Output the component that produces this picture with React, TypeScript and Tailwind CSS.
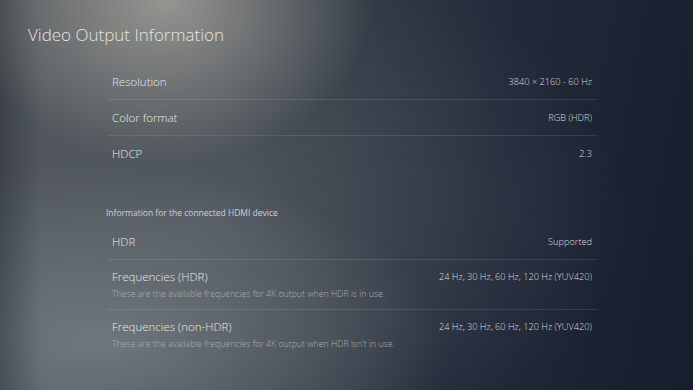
import React from "react";

const font = { fontFamily: '"Open Sans", "Noto Sans", sans-serif' };

function Row({ label, value, sub, border = true }: { label: string; value: string; sub?: string; border?: boolean }) {
  return (
    <div className={`flex flex-col ${border ? "border-b border-[rgba(255,255,255,0.1)]" : ""} ${sub ? "h-[50px] pt-[9px]" : "h-[36px] justify-center"} px-[5px]`}>
      <div className="flex items-center justify-between">
        <span className="text-[11.5px] leading-[16px] font-light text-[#e6e7e8]">{label}</span>
        <span className="text-[9.2px] leading-[14px] font-light text-[#dadcdf] pr-[1px]">{value}</span>
      </div>
      {sub && <div className="text-[8.75px] leading-[14px] mt-[2px] font-light text-[#a8adb1]">{sub}</div>}
    </div>
  );
}

export default function App() {
  return (
    <div
      style={font}
      className="relative w-[693px] h-[390px] overflow-hidden bg-[radial-gradient(ellipse_30%_42%_at_24%_0%,rgba(215,210,195,0.55),transparent),linear-gradient(90deg,rgba(20,25,35,0.35)_0%,transparent_6%),radial-gradient(ellipse_50%_45%_at_14%_88%,rgba(135,145,148,0.6),transparent),radial-gradient(ellipse_60%_70%_at_30%_55%,rgba(110,115,120,0.45),transparent),linear-gradient(100deg,#4d5358_0%,#3a414a_35%,#222a3a_68%,#161d2d_100%)]"
    >
      <div className="pl-[28px] pt-[24px] text-[17px] leading-[22px] font-light text-[#e4e4e2]">Video Output Information</div>
      <div className="ml-[107px] w-[491px] mt-[18px]">
        <Row label="Resolution" value="3840 × 2160 - 60 Hz" />
        <Row label="Color format" value="RGB (HDR)" />
        <Row label="HDCP" value="2.3" border={false} />
      </div>
      <div className="ml-[106px] mt-[34px] text-[8.5px] leading-[14px] text-[#cfd1d3]">Information for the connected HDMI device</div>
      <div className="ml-[107px] w-[491px] mt-[4px]">
        <Row label="HDR" value="Supported" />
        <Row label="Frequencies (HDR)" value="24 Hz, 30 Hz, 60 Hz, 120 Hz (YUV420)" sub="These are the available frequencies for 4K output when HDR is in use." />
        <Row label="Frequencies (non-HDR)" value="24 Hz, 30 Hz, 60 Hz, 120 Hz (YUV420)" sub="These are the available frequencies for 4K output when HDR isn't in use." border={false} />
      </div>
    </div>
  );
}
